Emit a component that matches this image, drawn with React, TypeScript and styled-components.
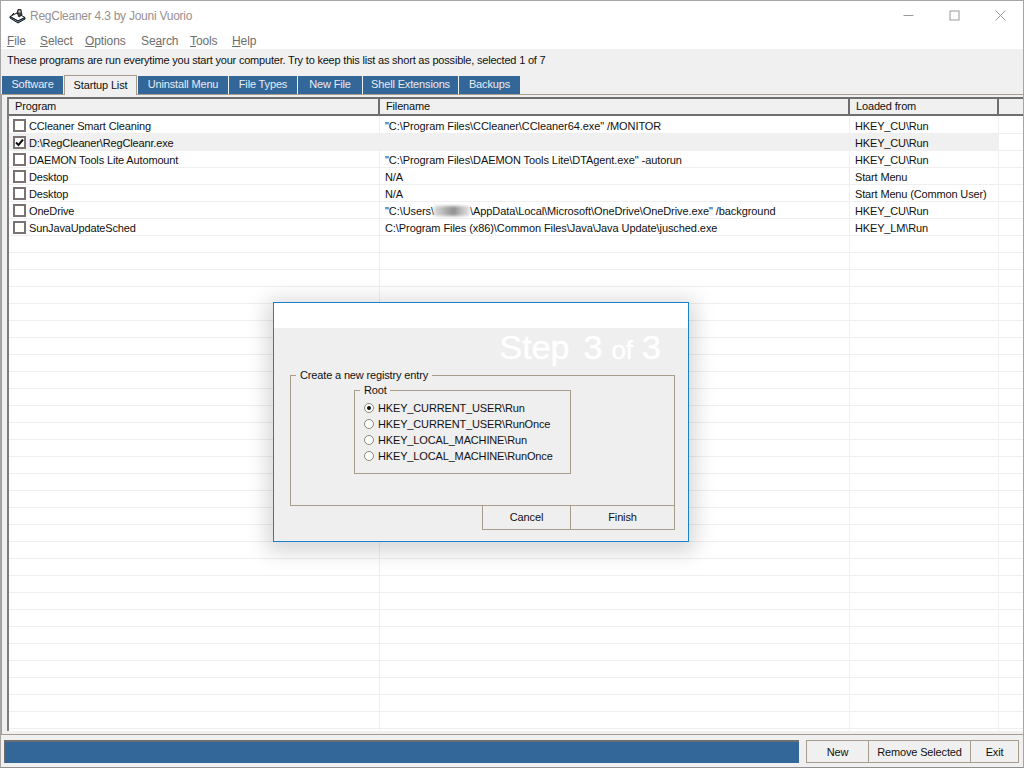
import React from "react";
import styled, { createGlobalStyle } from "styled-components";

const Global = createGlobalStyle`
  html, body { margin: 0; padding: 0; background: #fff; }
  * { box-sizing: border-box; }
  body { font-family: "Liberation Sans", Arial, sans-serif; font-size: 11px; letter-spacing: -0.15px; color: #111; }
`;

const Win = styled.div`
  position: relative;
  width: 1024px;
  height: 768px;
  overflow: hidden;
  display: flex;
  flex-direction: column;
  background: #fff;
  border: 1px solid #a6a6a6;
  border-bottom-color: #8f8f8f;
`;

const TitleBar = styled.div`
  height: 29px;
  flex: none;
  display: flex;
  align-items: center;
  padding-left: 8px;
`;
const TitleText = styled.div`
  margin-left: 3px;
  font-size: 12px;
  color: #9a8f8f;
  letter-spacing: -0.25px;
`;
const Controls = styled.div`
  margin-left: auto;
  display: flex;
  align-items: center;
  gap: 35px;
  padding: 0 17px 0 0;
  margin-top: -1px;
`;

const MenuBar = styled.div`
  height: 19px;
  flex: none;
  display: flex;
  align-items: center;
  padding: 2px 0 0 6px;
  color: #6e6e6e;
  font-size: 12px;
  letter-spacing: -0.1px;
`;
const MenuItem = styled.span<{ $w: number }>`
  width: ${(p) => p.$w}px;
  u { text-underline-offset: 1px; }
`;

const Info = styled.div`
  height: 25px;
  flex: none;
  background: #f0f0f0;
  padding: 4px 0 0 6px;
  line-height: 14px;
  letter-spacing: -0.2px;
  color: #111;
`;

const TabsRow = styled.div`
  height: 20px;
  flex: none;
  display: flex;
  align-items: flex-end;
  gap: 1px;
  padding-left: 1px;
  background: #f0f0f0;
`;
const Tab = styled.div<{ $w: number; $active?: boolean }>`
  width: ${(p) => p.$w}px;
  height: ${(p) => (p.$active ? 20 : 18)}px;
  display: flex;
  align-items: center;
  justify-content: center;
  padding-bottom: 2px;
  background: ${(p) => (p.$active ? "#f0f0f0" : "#336699")};
  color: ${(p) => (p.$active ? "#111" : "#e8edf3")};
  border: ${(p) => (p.$active ? "1px solid #a89c8c" : "none")};
  border-bottom: none;
  margin-bottom: ${(p) => (p.$active ? "-1px" : "0")};
  position: relative;
`;

const Panel = styled.div`
  flex: 1;
  min-height: 0;
  background: #f0f0f0;
  border-top: 1px solid #a89c8c;
  border-bottom: 1px solid #a89c8c;
  border-left: 1px solid #a89c8c;
  padding: 2px 0 3px 5px;
  display: flex;
`;
const ListBox = styled.div`
  flex: 1;
  min-width: 0;
  border-left: 2px solid #7d7d7d;
  border-top: 2px solid #6e6e6e;
  background: #fff;
  overflow: hidden;
  display: flex;
  flex-direction: column;
`;
const HeaderRow = styled.div`
  height: 16px;
  flex: none;
  display: grid;
  grid-template-columns: 371px 470px 149px 1fr;
  margin-bottom: 2px;
`;
const HeaderCell = styled.div`
  background: #f0f0f0;
  border-right: 2px solid #6e6e6e;
  border-bottom: 2px solid #6e6e6e;
  padding-left: 6px;
  line-height: 15px;
  color: #111;
  &:last-child { border-right: none; }
`;
const Row = styled.div`
  height: 17px;
  flex: none;
  display: grid;
  grid-template-columns: 371px 470px 149px 1fr;
  border-bottom: 1px solid #efefef;
`;
const Cell = styled.div<{ $sel?: boolean }>`
  display: flex;
  align-items: center;
  padding: 1px 0 0 5px;
  white-space: pre;
  overflow: hidden;
  color: #111;
  background: ${(p) => (p.$sel ? "#f0f0f0" : "transparent")};
  border-right: 1px solid #efefef;
  &:last-child { border-right: none; }
`;
const ProgramCell = styled(Cell)`
  padding-left: 4px;
  gap: 3px;
`;
const FileCell = styled(Cell)`
  letter-spacing: -0.08px;
`;
const Check = styled.span`
  width: 13px;
  height: 13px;
  flex: none;
  margin-top: -1px;
  border: 2px solid #7b7373;
  background: #fff;
  display: flex;
  align-items: center;
  justify-content: center;
`;
const Blur = styled.span`
  display: inline-block;
  flex: none;
  width: 36px;
  height: 10px;
  background: linear-gradient(90deg, #ddd 0%, #aaa 35%, #8f8f8f 55%, #bbb 75%, #e5e5e5 100%);
  filter: blur(1.5px);
`;

const StatusBar = styled.div`
  height: 32px;
  flex: none;
  background: #f0f0f0;
  padding: 5px 4px 3px 3px;
  display: flex;
`;
const Progress = styled.div`
  width: 795px;
  height: 23px;
  background: #336699;
  border-left: 1px solid #6e6e6e;
  border-top: 2px solid #6e6e6e;
`;
const BtnGroup = styled.div`
  margin-left: 7px;
  display: flex;
  height: 23px;
  border: 1px solid #a89c8c;
`;
const Btn = styled.div<{ $w: number }>`
  width: ${(p) => p.$w}px;
  display: flex;
  align-items: center;
  justify-content: center;
  padding-top: 1px;
  color: #111;
  border-right: 1px solid #a89c8c;
  &:last-child { border-right: none; }
`;

const Dialog = styled.div`
  position: absolute;
  left: 272px;
  top: 301px;
  width: 416px;
  height: 240px;
  border: 1px solid #1a80d0;
  background: #efefef;
  box-shadow: 0 4px 20px 6px rgba(0, 0, 0, 0.16);
  display: flex;
  flex-direction: column;
`;
const DlgHead = styled.div`
  height: 25px;
  flex: none;
  background: #fff;
`;
const Step = styled.div`
  height: 41px;
  flex: none;
  display: flex;
  justify-content: flex-end;
  align-items: baseline;
  padding: 0 27px 0 0;
  color: #fff;
  font-size: 34px;
  line-height: 38px;
  letter-spacing: 0;
  gap: 9px;
  -webkit-text-stroke: 0.4px #fff;
`;
const StepWord = styled.span`
  margin-right: 5px;
`;
const StepSmall = styled.span`
  font-size: 26px;
`;
const Group = styled.fieldset`
  margin: 0 13px 0 16px;
  padding: 0;
  height: 137px;
  flex: none;
  border: 1px solid #a89c8c;
  min-width: 0;
`;
const GroupLegend = styled.legend`
  margin-left: 5px;
  padding: 0 4px;
  line-height: 13px;
  color: #111;
`;
const Inner = styled.fieldset`
  margin: 2px 0 0 63px;
  padding: 3px 0 0 9px;
  width: 217px;
  height: 90px;
  border: 1px solid #a89c8c;
  min-width: 0;
`;
const InnerLegend = styled(GroupLegend)`
  margin-left: -4px;
  padding: 0 3px 0 4px;
`;
const RadioRow = styled.div`
  height: 16px;
  display: flex;
  align-items: center;
  gap: 4px;
  color: #111;
`;
const Radio = styled.span<{ $on?: boolean }>`
  width: 10px;
  height: 10px;
  flex: none;
  border-radius: 50%;
  border: 1px solid #8d8579;
  background: #fff;
  display: flex;
  align-items: center;
  justify-content: center;
  &::after {
    content: "";
    width: 4px;
    height: 4px;
    border-radius: 50%;
    background: ${(p) => (p.$on ? "#111" : "transparent")};
  }
`;
const DlgButtons = styled.div`
  align-self: flex-end;
  margin: -1px 13px 0 0;
  height: 25px;
  display: flex;
  border: 1px solid #a89c8c;
  background: #efefef;
`;
const DlgBtn = styled.div<{ $w: number }>`
  width: ${(p) => p.$w}px;
  display: flex;
  align-items: center;
  justify-content: center;
  padding-bottom: 2px;
  color: #111;
  border-right: 1px solid #a89c8c;
  &:last-child { border-right: none; }
`;

const AppIcon = () => (
  <svg width="18" height="18" viewBox="0 0 18 18">
    <path d="M1 9.5 L9 14 L16 10.5 L8 6 Z" fill="#fff" stroke="#111" strokeWidth="1" />
    <path d="M1 9.5 L1 11 L9 16 L16 12 L16 10.5 L9 14 Z" fill="#7f9cc0" stroke="#111" strokeWidth="1" />
    <path d="M8 6 L9 2.5 L12 2.5 L13 8 L10 10 Z" fill="#444" stroke="#111" strokeWidth="0.8" />
    <path d="M9.5 3.5 h2 v2 h-2 z" fill="#dcdcdc" />
    <path d="M3 8 l2 -2" stroke="#111" strokeWidth="1" />
  </svg>
);

const MinIcon = () => (
  <svg width="11" height="11" viewBox="0 0 11 11"><path d="M0.5 5.5 H10.5" stroke="#9a9a9a" /></svg>
);
const MaxIcon = () => (
  <svg width="11" height="11" viewBox="0 0 11 11"><rect x="1" y="1" width="9" height="9" fill="none" stroke="#9a9a9a" /></svg>
);
const CloseIcon = () => (
  <svg width="11" height="11" viewBox="0 0 11 11"><path d="M0.5 0.5 L10.5 10.5 M10.5 0.5 L0.5 10.5" stroke="#9a9a9a" /></svg>
);
const Tick = () => (
  <svg width="9" height="9" viewBox="0 0 9 9">
    <path d="M1 4.5 L3.5 7 L8 1.5" fill="none" stroke="#111" strokeWidth="2" />
  </svg>
);

const menus: [React.ReactNode, number][] = [
  [<><u>F</u>ile</>, 33],
  [<><u>S</u>elect</>, 45],
  [<><u>O</u>ptions</>, 56],
  [<>Se<u>a</u>rch</>, 49],
  [<><u>T</u>ools</>, 42],
  [<><u>H</u>elp</>, 40],
];

const tabs: [string, number, boolean?][] = [
  ["Software", 61],
  ["Startup List", 73, true],
  ["Uninstall Menu", 90],
  ["File Types", 68],
  ["New File", 64],
  ["Shell Extensions", 95],
  ["Backups", 61],
];

type Entry = { name: string; file: React.ReactNode; from: string; checked?: boolean };
const entries: Entry[] = [
  { name: "CCleaner Smart Cleaning", file: '"C:\\Program Files\\CCleaner\\CCleaner64.exe" /MONITOR', from: "HKEY_CU\\Run" },
  { name: "D:\\RegCleaner\\RegCleanr.exe", file: "", from: "HKEY_CU\\Run", checked: true },
  { name: "DAEMON Tools Lite Automount", file: '"C:\\Program Files\\DAEMON Tools Lite\\DTAgent.exe" -autorun', from: "HKEY_CU\\Run" },
  { name: "Desktop", file: "N/A", from: "Start Menu" },
  { name: "Desktop", file: "N/A", from: "Start Menu (Common User)" },
  {
    name: "OneDrive",
    file: <><span>"C:\Users\</span><Blur /><span>\AppData\Local\Microsoft\OneDrive\OneDrive.exe" /background</span></>,
    from: "HKEY_CU\\Run",
  },
  { name: "SunJavaUpdateSched", file: "C:\\Program Files (x86)\\Common Files\\Java\\Java Update\\jusched.exe", from: "HKEY_LM\\Run" },
];

const emptyRows = Array.from({ length: 30 }, (_, i) => i);

const roots = [
  "HKEY_CURRENT_USER\\Run",
  "HKEY_CURRENT_USER\\RunOnce",
  "HKEY_LOCAL_MACHINE\\Run",
  "HKEY_LOCAL_MACHINE\\RunOnce",
];

export default function App() {
  return (
    <Win>
      <Global />
      <TitleBar>
        <AppIcon />
        <TitleText>RegCleaner 4.3 by Jouni Vuorio</TitleText>
        <Controls>
          <MinIcon />
          <MaxIcon />
          <CloseIcon />
        </Controls>
      </TitleBar>
      <MenuBar>
        {menus.map(([m, w], i) => (
          <MenuItem key={i} $w={w}>{m}</MenuItem>
        ))}
      </MenuBar>
      <Info>These programs are run everytime you start your computer. Try to keep this list as short as possible, selected 1 of 7</Info>
      <TabsRow>
        {tabs.map(([t, w, a]) => (
          <Tab key={t} $w={w} $active={a}>{t}</Tab>
        ))}
      </TabsRow>
      <Panel>
        <ListBox>
          <HeaderRow>
            <HeaderCell>Program</HeaderCell>
            <HeaderCell>Filename</HeaderCell>
            <HeaderCell>Loaded from</HeaderCell>
            <HeaderCell />
          </HeaderRow>
          {entries.map((e, i) => (
            <Row key={i}>
              <ProgramCell $sel={e.checked}>
                <Check>{e.checked && <Tick />}</Check>
                {e.name}
              </ProgramCell>
              <FileCell $sel={e.checked}>{e.file}</FileCell>
              <Cell $sel={e.checked}>{e.from}</Cell>
              <Cell />
            </Row>
          ))}
          {emptyRows.map((i) => (
            <Row key={i}>
              <Cell />
              <Cell />
              <Cell />
              <Cell />
            </Row>
          ))}
        </ListBox>
      </Panel>
      <StatusBar>
        <Progress />
        <BtnGroup>
          <Btn $w={62}>New</Btn>
          <Btn $w={102}>Remove Selected</Btn>
          <Btn $w={47}>Exit</Btn>
        </BtnGroup>
      </StatusBar>
      <Dialog>
        <DlgHead />
        <Step>
          <StepWord>Step</StepWord>
          <span>3</span>
          <StepSmall>of</StepSmall>
          <span>3</span>
        </Step>
        <Group>
          <GroupLegend>Create a new registry entry</GroupLegend>
          <Inner>
            <InnerLegend>Root</InnerLegend>
            {roots.map((r, i) => (
              <RadioRow key={r}>
                <Radio $on={i === 0} />
                {r}
              </RadioRow>
            ))}
          </Inner>
        </Group>
        <DlgButtons>
          <DlgBtn $w={88}>Cancel</DlgBtn>
          <DlgBtn $w={103}>Finish</DlgBtn>
        </DlgButtons>
      </Dialog>
    </Win>
  );
}
